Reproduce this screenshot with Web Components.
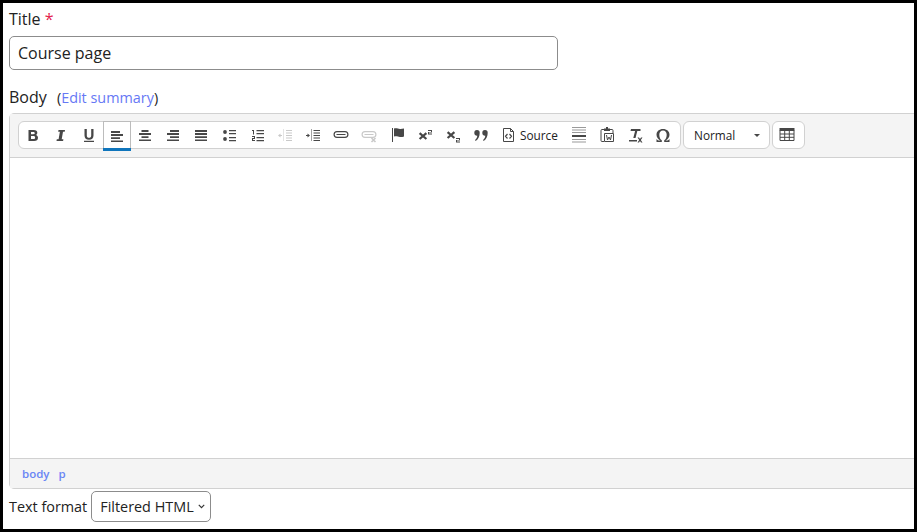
<!DOCTYPE html>
<html lang="en">
<head>
<meta charset="utf-8">
<title>Course page</title>
<style>
  html, body { margin: 0; height: 100%; background: #000; }
  body { font-family: "Open Sans", "Noto Sans", sans-serif; color: #222; overflow: hidden; }
</style>
</head>
<body>
<edit-form>
  <text-field label="Title" value="Course page"></text-field>
  <rich-editor>
    <tool-bar>
      <tool-group>
        <tool-button><svg viewBox="0 0 16 16"><path fill="#474747" fill-rule="evenodd" d="M3.500 3h5.300c2.300 0 3.500 1 3.500 2.800 0 1.100-.6 1.900-1.500 2.200 1.300.3 2.200 1.200 2.200 2.800 0 2.100-1.500 3.200-3.800 3.200H3.500zM6 4.900v2.300h2.300c.9 0 1.400-.4 1.400-1.200 0-.7-.5-1.100-1.400-1.100zM6 9v3.100h2.500c1.100 0 1.600-.5 1.600-1.600 0-1-.6-1.500-1.700-1.500z"/></svg></tool-button>
        <tool-button><svg viewBox="0 0 16 16"><path fill="#474747" d="M5.500 3H12l-.3 1.700H10l-1.300 7.600h1.700L10.100 14H3.500l.3-1.700h1.800l1.300-7.600H5.200z"/></svg></tool-button>
        <tool-button><svg viewBox="0 0 16 16"><path fill="#474747" d="M3.500 2h2.300v6.400c0 1.600.8 2.400 2.200 2.400s2.200-.8 2.200-2.400V2h2.300v6.600c0 2.800-1.700 4.200-4.500 4.200s-4.500-1.400-4.500-4.200zM3 13.800h10V15H3z"/></svg></tool-button>
        <tool-button active><svg viewBox="0 0 16 16"><path fill="#474747" d="M2 3h9v2H2zM2 6h12v2H2zM2 9.200h9v1.800H2zM2 12.400h12V14H2z"/></svg></tool-button>
        <tool-button><svg viewBox="0 0 16 16"><path fill="#474747" d="M4.500 3h7v2h-7zM2 6h12v2H2zM4.500 9.200h7v1.800h-7zM2 12.400h12V14H2z"/></svg></tool-button>
        <tool-button><svg viewBox="0 0 16 16"><path fill="#474747" d="M5 3h9v2H5zM2 6h12v2H2zM5 9.200h9v1.800H5zM2 12.400h12V14H2z"/></svg></tool-button>
        <tool-button><svg viewBox="0 0 16 16"><path fill="#474747" d="M2 3h12v2H2zM2 6h12v2H2zM2 9.200h12v1.800H2zM2 12.400h12V14H2z"/></svg></tool-button>
        <tool-button><svg viewBox="0 0 16 16"><circle fill="#474747" cx="4" cy="5" r="1.900"/><circle fill="#474747" cx="4" cy="12" r="1.900"/><path fill="#474747" d="M8 3h7v1.200H8zM8 6h7v1.200H8zM8 10h7v1.200H8zM8 13h7v1.200H8z"/></svg></tool-button>
        <tool-button><svg viewBox="0 0 16 16"><path fill="#474747" d="M3 3h2v4.500H4V4H3zM3 9h3v3H4v1h2v1H3v-3h2v-1H3zM7.500 3H15v1.200H7.500zM7.500 6H15v1.200H7.500zM7.500 10H15v1.200H7.500zM7.500 13H15v1.200H7.500z"/></svg></tool-button>
        <tool-button disabled><svg viewBox="0 0 16 16"><path fill="#c9c9c9" d="M9 3h6v1H9zM9 5.500h6v1H9zM9 8h6v1H9zM9 10.500h6v1H9zM9 13h6v1H9zM1 8.500L3.500 6.500v1.500H5v1H3.500v1.500z"/><path fill="none" stroke="#c9c9c9" stroke-dasharray="1 1" d="M6.500 2.500v12"/></svg></tool-button>
        <tool-button><svg viewBox="0 0 16 16"><path fill="#474747" d="M8.500 3H15v1H8.500zM8.500 5.500H15v1H8.500zM8.500 8H15v1H8.500zM8.500 10.500H15v1H8.500zM8.500 13H15v1H8.500zM5 8.500L2.500 6.500v1.500H1v1h1.500v1.500z"/><path fill="none" stroke="#474747" stroke-dasharray="1 1" d="M6.500 2.500v12"/></svg></tool-button>
        <tool-button><svg viewBox="0 0 16 16"><path fill="none" stroke="#474747" stroke-width="1.200" d="M4 4.600h8a2.900 2.900 0 0 1 0 5.800H4a2.900 2.900 0 0 1 0-5.800zM3.500 7.500h9"/></svg></tool-button>
        <tool-button disabled><svg viewBox="0 0 16 16"><path fill="none" stroke="#c9c9c9" stroke-width="1.200" d="M4 4.600h8a2.900 2.900 0 0 1 0 5.800H4a2.900 2.900 0 0 1 0-5.800zM3.500 7.500h9"/><path fill="none" stroke="#c9c9c9" stroke-width="1.600" d="M10.500 11l4 4m0-4l-4 4"/></svg></tool-button>
        <tool-button><svg viewBox="0 0 16 16"><path fill="#474747" d="M3 1h1v14H3zM5 1.500c2.500-.8 4 .3 6 .5 1.300.1 2.500-.2 4-.5v8c-1.500.5-2.700.7-4 .5-2-.3-3.500-1.300-6-.5z"/></svg></tool-button>
        <tool-button><svg viewBox="0 0 16 16"><path fill="none" stroke="#474747" stroke-width="2.200" d="M2.600 6.200l6.800 5.800m0-5.800l-6.800 5.800"/><path fill="#474747" d="M11 3h4v2.500h-3v1h3v.9h-4V4.900h3V3.900h-3z"/></svg></tool-button>
        <tool-button><svg viewBox="0 0 16 16"><path fill="none" stroke="#474747" stroke-width="2.200" d="M2.600 5.200l6.800 5.800m0-5.800l-6.800 5.800"/><path fill="#474747" d="M11 11h4v2.500h-3v1h3v.9h-4v-2.500h3v-1h-3z"/></svg></tool-button>
        <tool-button><svg viewBox="0 0 16 16"><path fill="#474747" d="M4 3a2.700 2.700 0 0 1 2.700 2.700c0 3.400-1.300 6.700-4 8.300l-.7-1c1.300-1 2-2.200 2.300-4.300A2.700 2.700 0 0 1 4 3zM12 3a2.700 2.700 0 0 1 2.700 2.700c0 3.400-1.300 6.700-4 8.300l-.7-1c1.300-1 2-2.200 2.300-4.300A2.700 2.700 0 0 1 12 3z"/></svg></tool-button>
        <tool-button wide label="Source"><svg viewBox="0 0 16 16"><path fill="none" stroke="#474747" d="M2.500 1.500h7l3 3v10h-10zM9.500 1.500v3h3"/><path fill="none" stroke="#474747" stroke-width="1.200" d="M6.500 7L4.500 9.300 6.500 11.500M8.500 7l2 2.300-2 2.200"/></svg></tool-button>
        <tool-button><svg viewBox="0 0 16 16"><path fill="#9a9a9a" d="M1 0h14v1H1zM1 2.500h14v1H1zM1 5h14v1H1zM1 12h14v1H1zM1 14.500h14v1H1z"/><path fill="#474747" d="M1 8h14v2H1z"/></svg></tool-button>
        <tool-button><svg viewBox="0 0 16 16"><path fill="none" stroke="#474747" d="M5 2.500H3a1 1 0 0 0-1 1v10a1 1 0 0 0 1 1h2M11 2.500h2a1 1 0 0 1 1 1V6"/><path fill="#474747" d="M5 1.500h6v2.500H5zM7 0h2v2H7z"/><path fill="none" stroke="#474747" d="M5.500 6.500h9v8h-9z"/><path fill="none" stroke="#474747" d="M7.500 8l1 5 1.500-3 1.500 3 1-5"/></svg></tool-button>
        <tool-button><svg viewBox="0 0 16 16"><path fill="#474747" d="M4 2h9.500v2H10.300L8.500 11H6.300l1.800-7H3.500zM2 13h8v1.500H2zM10.500 10.500H12l1 1.600 1-1.600h1.500L13.800 13l1.700 2.500H14l-1-1.600-1 1.600h-1.500l1.700-2.500z"/></svg></tool-button>
        <tool-button><svg viewBox="0 0 16 16"><path fill="#474747" d="M1.500 15v-3l1 1.100c.3.200.6.300 1 .3h2C3 12.200 1.500 10.200 1.500 7.700 1.500 4.300 4.200 2 8 2s6.500 2.300 6.500 5.700c0 2.500-1.500 4.500-4 5.700h2c.4 0 .7-.1 1-.3l1-1.100v3H9.200v-1.700c1.500-.8 2.500-3 2.500-5.500 0-2.700-1.400-4.400-3.700-4.400S4.300 5.100 4.300 7.800c0 2.500 1 4.700 2.500 5.500V15z"/></svg></tool-button>
      </tool-group>
      <tool-combo>Normal</tool-combo>
      <tool-group single>
        <tool-button><svg viewBox="0 0 16 16"><path fill="#474747" d="M.5 1h15v3h-15z"/><path fill="none" stroke="#474747" d="M1 3.500h14v10H1zM1 7h14M1 10.300h14M5.700 3.500v10M10.300 3.500v10"/></svg></tool-button>
      </tool-group>
    </tool-bar>
    <span slot="path">body</span>
    <span slot="path">p</span>
  </rich-editor>
  <format-picker value="Filtered HTML"></format-picker>
</edit-form>

<script>
// Outer page: black frame and the vertical flow of the form
class EditForm extends HTMLElement {
  constructor() {
    super();
    this.attachShadow({ mode: 'open' }).innerHTML = `
      <style>
        :host { display: block; box-sizing: border-box; height: 526px; width: 911px; margin: 3px 3px 0;
                background: #fff; overflow: hidden; padding: 0 0 0 6px; }
      </style>
      <slot></slot>`;
  }
}

class TextField extends HTMLElement {
  constructor() {
    super();
    this.attachShadow({ mode: 'open' }).innerHTML = `
      <style>
        :host { display: block; }
        label { display: block; font-size: 16px; line-height: 22px; padding-top: 5px; color: #222; }
        i { color: #e4234e; font-style: normal; }
        div { box-sizing: border-box; width: 549px; height: 34px; margin-top: 6px; border: 1px solid #8c8c8c;
              border-radius: 5px; font-size: 16px; line-height: 32px; padding-left: 8px; color: #222; }
      </style>
      <label>${this.getAttribute('label')} <i>*</i></label>
      <div>${this.getAttribute('value')}</div>`;
  }
}

class RichEditor extends HTMLElement {
  constructor() {
    super();
    this.attachShadow({ mode: 'open' }).innerHTML = `
      <style>
        :host { display: block; }
        .head { font-size: 16px; line-height: 22px; margin-top: 16px; color: #222; }
        .head small { font-size: 14.400px; margin-left: 6px; }
        .head a { color: #6678f5; }
        .box { box-sizing: border-box; width: 960px; height: 376px; margin-top: 4px; border: 1px solid #d1d1d1;
               border-radius: 5px 0 0 5px; display: flex; flex-direction: column; }
        .body { flex: 1; background: #fff; }
        .foot { height: 30px; box-sizing: border-box; background: #f4f4f4; border-top: 1px solid #d1d1d1;
                padding-left: 12px; display: flex; align-items: center; gap: 9px;
                font-size: 11.500px; font-weight: 600; color: #6a86f5; }
      </style>
      <div class="head">Body <small>(<a>Edit summary</a>)</small></div>
      <div class="box">
        <slot></slot>
        <div class="body"></div>
        <div class="foot"><slot name="path"></slot></div>
      </div>`;
  }
}

class ToolBar extends HTMLElement {
  constructor() {
    super();
    this.attachShadow({ mode: 'open' }).innerHTML = `
      <style>
        :host { display: flex; box-sizing: border-box; height: 44px; background: #f4f4f4; flex: none;
                border-bottom: 1px solid #d1d1d1; padding: 7px 0 0 8px; gap: 2px; align-items: flex-start; }
      </style>
      <slot></slot>`;
  }
}

class ToolGroup extends HTMLElement {
  constructor() {
    super();
    this.attachShadow({ mode: 'open' }).innerHTML = `
      <style>
        :host { display: flex; box-sizing: border-box; height: 28px; background: #fff; border: 1px solid #d1d1d1;
                border-radius: 6px; padding-right: 3px; }
        :host([single]) { padding-right: 0; width: 33px; }
      </style>
      <slot></slot>`;
  }
}

class ToolButton extends HTMLElement {
  constructor() {
    super();
    const label = this.getAttribute('label');
    this.attachShadow({ mode: 'open' }).innerHTML = `
      <style>
        :host { display: flex; box-sizing: border-box; width: 28px; height: 26px; align-items: center;
                justify-content: center; gap: 3px; font-size: 11.800px; color: #222; }
        :host([wide]) { width: 70px; justify-content: flex-start; padding-left: 6px; }
        :host([active]) { border: 1px solid #bcbcbc; border-bottom: 0; height: 29px; margin-top: -1px; position: relative; }
        :host([active])::after { content: ""; position: absolute; left: -1px; right: -1px; bottom: -1px; height: 3px; background: #0f75bc; }
        ::slotted(svg) { width: 16px; height: 16px; display: block; flex: none; }
      </style>
      <slot></slot>${label ? `<span>${label}</span>` : ''}`;
  }
}

class ToolCombo extends HTMLElement {
  constructor() {
    super();
    this.attachShadow({ mode: 'open' }).innerHTML = `
      <style>
        :host { display: flex; box-sizing: border-box; width: 87px; height: 28px; background: #fff; border: 1px solid #d1d1d1;
                border-radius: 6px; align-items: center; padding-left: 10px; padding-bottom: 1px; font-size: 11.800px; color: #222; position: relative; }
        b { position: absolute; left: 70px; top: 12px; border: 3px solid transparent; border-top-color: #474747; border-bottom: 0; }
      </style>
      <slot></slot><b></b>`;
  }
}

class FormatPicker extends HTMLElement {
  constructor() {
    super();
    this.attachShadow({ mode: 'open' }).innerHTML = `
      <style>
        :host { display: flex; align-items: center; gap: 4px; margin-top: 2px; font-size: 14.400px; color: #222; }
        div { box-sizing: border-box; width: 120px; height: 31px; border: 1px solid #8c8c8c; border-radius: 5px;
              display: flex; align-items: center; padding-left: 8px; position: relative; }
        svg { position: absolute; right: 5px; top: 12px; width: 7px; height: 5px; }
      </style>
      Text format
      <div>${this.getAttribute('value')}<svg viewBox="0 0 9 6"><path fill="none" stroke="#333" stroke-width="1.500" d="M1 1l3.500 3.500L8 1"/></svg></div>`;
  }
}

customElements.define('edit-form', EditForm);
customElements.define('text-field', TextField);
customElements.define('rich-editor', RichEditor);
customElements.define('tool-bar', ToolBar);
customElements.define('tool-group', ToolGroup);
customElements.define('tool-button', ToolButton);
customElements.define('tool-combo', ToolCombo);
customElements.define('format-picker', FormatPicker);
</script>
</body>
</html>
